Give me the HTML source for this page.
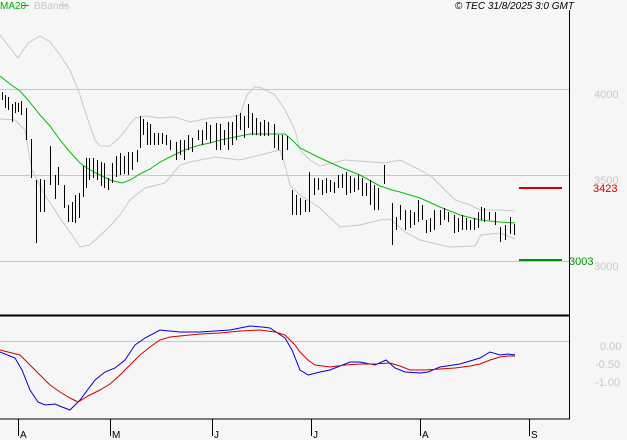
<!DOCTYPE html>
<html><head><meta charset="utf-8"><style>
html,body{margin:0;padding:0;background:#f6f6f6;}
svg{display:block;font-family:"Liberation Sans",sans-serif;}
</style></head><body>
<svg width="627" height="440" viewBox="0 0 627 440" xmlns="http://www.w3.org/2000/svg">
<rect width="627" height="440" fill="#f6f6f6"/>
<g stroke="#c8c8c8" stroke-width="1" fill="none">
<line x1="0" y1="89.5" x2="569" y2="89.5"/>
<line x1="0" y1="175.5" x2="569" y2="175.5"/>
<line x1="0" y1="261.5" x2="569" y2="261.5"/>
<line x1="0" y1="341.5" x2="569" y2="341.5"/>
</g>
<g stroke="#c8c8c8" stroke-width="1" fill="none">
<polyline points="0,35 18,58 28,43 40,36 50,42 60,55 70,70 80,95 88,120 95,140 100,146 110,146 120,137 135,118 145,116 160,118 175,117 190,122 210,118 230,117 240,115 247,95 255,87 262,88 275,95 285,110 295,130 300,150 310,160 320,166 345,160 385,163 400,160 420,170 432,177 445,190 455,200 470,205 480,210 500,210 515,211"/>
<polyline points="0,119 15,120 25,130 32,170 45,195 60,218 72,235 80,247 90,245 110,226 120,215 130,200 145,188 165,183 180,165 190,162 200,160 215,157 240,160 280,150 285,165 290,185 300,195 320,208 340,227 360,225 380,220 390,219 405,232 420,240 450,247 475,246 481,235 500,233 515,239"/>
</g>
<polyline fill="none" stroke="#00c000" stroke-width="1" points="0,76 10,84 20,91 28,100 40,115 50,126 60,140 70,152 80,163 90,170 100,175 110,180 122,183 130,180 140,174 150,169 160,162 170,157 180,152 190,148 200,145 210,143 220,140 230,138 240,136 250,134 260,134 275,134 285,134 292,140 300,148 320,158 340,167 360,175 380,186 392,190 400,192 420,198 440,207 460,215 480,220 500,222 515,223"/>
<path stroke="#000" stroke-width="1" fill="none" d="
M2.5 92V100M5.5 95V108M8.5 97V110M12.5 104V122M15.5 102V113M18.5 103V112M21.5 101V115M26.5 108V140M31.5 139V178M36.5 180V243M40.5 179V212M44.5 180V212M50.5 146V185M55.5 175V199M58.5 167V185M64.5 185V208M68.5 205V222M72.5 202V222M75.5 195V223M79.5 193V218M83.5 166V197M86.5 158V188M89.5 158V180M93.5 158V178M97.5 160V180M101.5 162V186M104.5 163V188M108.5 178V190M112.5 163V183M116.5 156V177M120.5 153V175M124.5 156V174M128.5 152V175M132.5 152V170M137.5 150V162M140.5 116V148M143.5 119V135M147.5 122V145M150.5 124V145M154.5 133V145M158.5 133V145M162.5 133V144M166.5 135V145M170.5 140V150M176.5 142V160M180.5 140V155M184.5 140V160M188.5 135V150M192.5 138V152M198.5 130V140M202.5 130V145M206.5 122V140M210.5 125V143M216.5 123V150M220.5 124V150M224.5 130V145M228.5 122V150M232.5 122V145M236.5 115V140M240.5 113V130M244.5 116V138M248.5 104V128M252.5 113V135M256.5 118V135M260.5 122V136M264.5 120V136M268.5 122V136M274.5 124V148M278.5 135V150M282.5 135V160M287.5 136V150M292.5 190V215M296.5 195V215M300.5 198V215M305.5 200V212M309.5 172V212M314.5 178V195M318.5 178V190M322.5 180V195M326.5 178V193M330.5 180V192M334.5 182V193M338.5 175V188M342.5 174V188M346.5 172V195M350.5 176V193M354.5 178V192M358.5 175V190M362.5 178V196M366.5 183V196M370.5 180V205M374.5 185V210M378.5 188V210M384.5 165V184M392.5 203V245M396.5 217V230M400.5 205V220M405.5 210V230M410.5 210V228M414.5 212V225M418.5 200V222M422.5 205V220M426.5 220V233M430.5 218V232M434.5 210V230M440.5 210V225M444.5 208V220M448.5 212V222M454.5 215V233M458.5 218V232M462.5 215V230M466.5 218V230M470.5 220V230M474.5 218V230M478.5 212V228M481.5 207V220M484.5 208V222M489.5 212V220M495.5 212V225M500.5 227V242M505.5 225V240M510.5 217V234M514.5 224V235"/>
<line x1="519" y1="188" x2="562" y2="188" stroke="#d00000" stroke-width="2"/>
<line x1="519" y1="260" x2="562" y2="260" stroke="#009000" stroke-width="2"/>
<polyline fill="none" stroke="#0000d0" stroke-width="1" points="0,352 15,358 22,370 30,390 38,402 45,405 55,404 62,407 70,410 80,400 95,380 105,372 115,368 125,360 135,345 145,338 160,330 180,332 200,332 230,330 250,326 262,327 270,328 285,338 292,350 300,370 308,375 320,372 330,370 350,362 360,362 375,365 386,360 395,368 405,372 420,373 428,372 440,367 460,364 480,358 490,352 500,355 508,354 515,355"/>
<polyline fill="none" stroke="#d00000" stroke-width="1" points="0,350 20,355 30,365 40,375 50,385 60,392 70,398 78,402 88,396 100,390 110,384 120,375 130,365 140,355 150,347 160,340 170,337 180,336 200,334 220,333 240,331 260,330 275,332 285,335 295,345 300,352 308,360 315,365 330,367 345,365 360,364 375,364 390,363 400,366 410,370 425,370 440,369 455,368 470,366 480,364 490,360 500,357 508,356 515,356"/>
<line x1="569.5" y1="10" x2="569.5" y2="419" stroke="#000" stroke-width="1"/>
<line x1="0" y1="315.5" x2="570" y2="315.5" stroke="#000" stroke-width="2"/>
<line x1="0" y1="419" x2="570" y2="419" stroke="#000" stroke-width="1"/>
<g stroke="#000" stroke-width="1">
<line x1="18.5" y1="419" x2="18.5" y2="436"/>
<line x1="110.5" y1="419" x2="110.5" y2="436"/>
<line x1="212.5" y1="419" x2="212.5" y2="436"/>
<line x1="311.5" y1="419" x2="311.5" y2="436"/>
<line x1="420.5" y1="419" x2="420.5" y2="436"/>
<line x1="529.5" y1="419" x2="529.5" y2="436"/>
</g>
<g font-size="10" fill="#000">
<text x="20" y="438">A</text>
<text x="112" y="438">M</text>
<text x="214" y="438">J</text>
<text x="313" y="438">J</text>
<text x="422" y="438">A</text>
<text x="531" y="438">S</text>
</g>
<g font-size="11" fill="#c8c8c8">
<text x="594" y="98">4000</text>
<text x="594" y="184">3500</text>
<text x="594" y="270">3000</text>
<text x="600" y="350">0.00</text>
<text x="595" y="368">-0.50</text>
<text x="595" y="386">-1.00</text>
</g>
<text x="593" y="192" font-size="11" fill="#d00000">3423</text>
<text x="569" y="265" font-size="11" fill="#009000">3003</text>
<text x="0" y="9" font-size="10" fill="#00b000">MA20</text>
<line x1="22" y1="5.5" x2="29" y2="5.5" stroke="#00b000" stroke-width="1"/>
<text x="34" y="9" font-size="10" fill="#c8c8c8">BBands</text>
<line x1="60" y1="5.5" x2="68" y2="5.5" stroke="#c8c8c8" stroke-width="1"/>
<text x="574" y="9" font-size="10" font-style="italic" fill="#000" text-anchor="end">© TEC 31/8/2025 3:0 GMT</text>
</svg>
</body></html>
